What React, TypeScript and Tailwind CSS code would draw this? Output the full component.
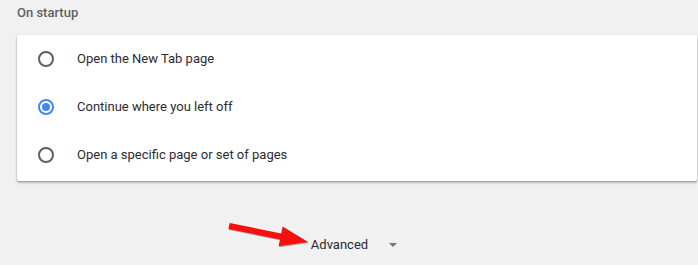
import React from "react";

function Radio({ checked }: { checked?: boolean }) {
  return checked ? (
    <span className="flex h-4 w-4 items-center justify-center rounded-full border-2 border-[#4285f4]">
      <span className="h-2 w-2 rounded-full bg-[#4285f4]" />
    </span>
  ) : (
    <span className="h-4 w-4 rounded-full border-2 border-[#5f5f5f]" />
  );
}

const rows = [
  { label: "Open the New Tab page", checked: false },
  { label: "Continue where you left off", checked: true },
  { label: "Open a specific page or set of pages", checked: false },
];

export default function App() {
  return (
    <div
      className="relative h-[265px] w-[698px] overflow-hidden bg-[#f1f1f1]"
      style={{ fontFamily: "Roboto, 'Liberation Sans', sans-serif" }}
    >
      <div className="pl-[17px] pt-[5px]">
        <div className="h-[30px] text-[13px] font-medium leading-[16px] text-[#616161]">On startup</div>
        <div className="flex h-[146px] w-[680px] flex-col rounded-[2px] bg-white shadow-[0_1px_2px_rgba(0,0,0,0.3),0_2px_3px_rgba(0,0,0,0.15)]">
          {rows.map((r) => (
            <div key={r.label} className="flex h-[48px] items-center pl-[21px]">
              <Radio checked={r.checked} />
              <span className="ml-[23px] text-[13px] text-[#2b2b33]">{r.label}</span>
            </div>
          ))}
        </div>
        <div className="mt-[54px] flex w-[680px] items-center justify-center pr-[6px]">
          <span className="text-[13px] text-[#2b2b33]">Advanced</span>
          <span className="ml-[21px] mt-[1px] h-0 w-0 border-x-[4px] border-t-[4px] border-x-transparent border-t-[#757575]" />
        </div>
      </div>
      <svg className="absolute left-0 top-0" width="698" height="265" viewBox="0 0 698 265">
        <polygon
          points="229.6,223 281.2,233.5 282.6,226.6 308,242 278.6,246.2 280,239.4 228.4,229"
          fill="#555"
          opacity="0.5"
          transform="translate(0.8,1)"
        />
        <polygon
          points="229.6,223 281.2,233.5 282.6,226.6 308,242 278.6,246.2 280,239.4 228.4,229"
          fill="#f50f0f"
        />
      </svg>
    </div>
  );
}
